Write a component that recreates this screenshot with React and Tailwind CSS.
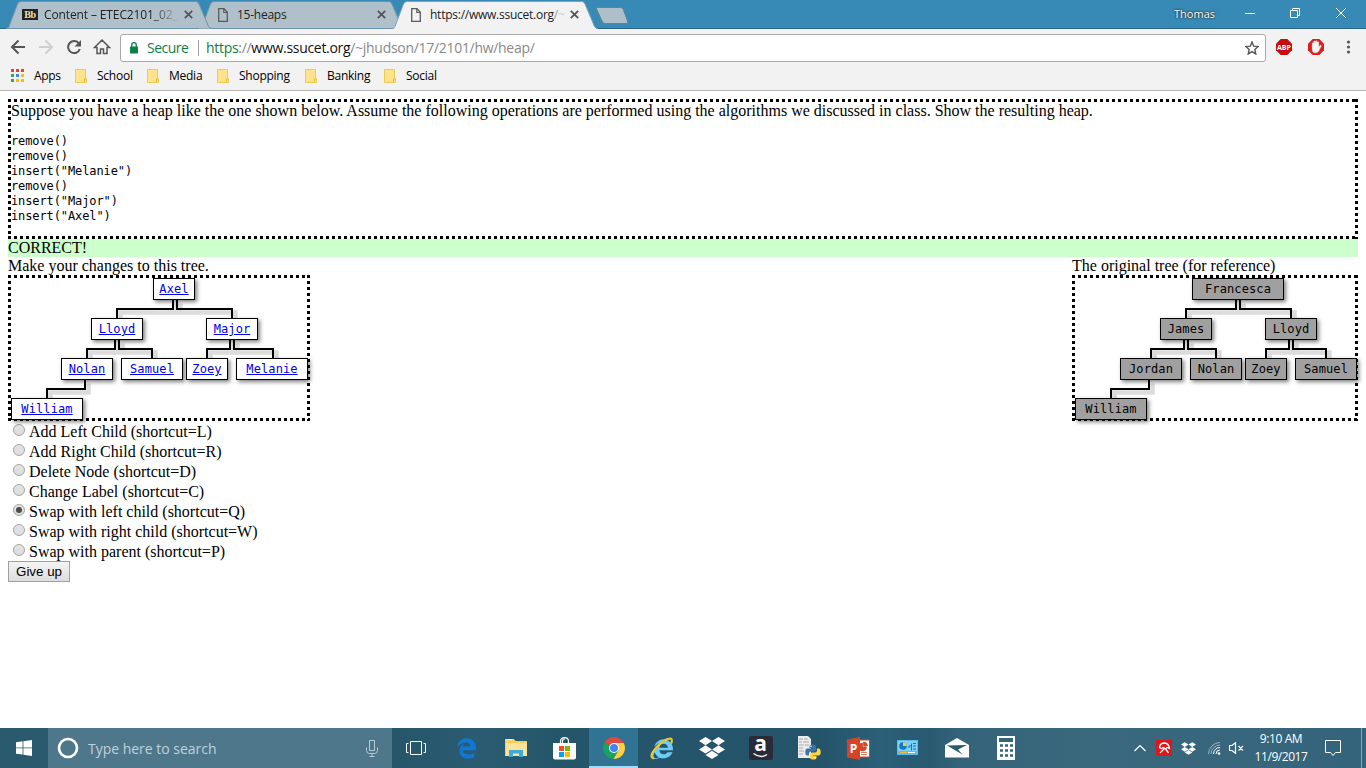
import React from "react";
import { FaDropbox, FaEdgeLegacy, FaInternetExplorer, FaPython } from "react-icons/fa";

const UI = "font-['Open_Sans','Noto_Sans',sans-serif]";

function TabShape({ active }) {
  const d = "M0 28.500Q2 28.500 3 26.500L11.500 4Q12.500 1.500 15 1.500H190Q192 1.500 193 4L202.500 26.500Q203.500 28.500 206 28.500";
  return (
    <svg className="absolute inset-0" width="208" height="29" viewBox="0 0 208 29">
      <path d={d + "Z"} fill={active ? "#f2f2f2" : "#afc0cb"} />
      <path d={d} fill="none" stroke={active ? "#7fa3b8" : "#7394a7"} strokeWidth="1" />
      {active && <rect x="2" y="28" width="202" height="1" fill="#f2f2f2" />}
    </svg>
  );
}

function PageIcon() {
  return (
    <svg width="10" height="14" viewBox="0 0 10 14" className="shrink-0">
      <path d="M.7.7H6L9.300 4.200V13.300H.7Z" fill="none" stroke="#5a5a5a" strokeWidth="1.3" />
      <path d="M5.800.7V4.500H9.300" fill="none" stroke="#5a5a5a" strokeWidth="1.2" />
    </svg>
  );
}

function CloseX() {
  return (
    <svg width="9" height="9" viewBox="0 0 9 9" className="shrink-0">
      <path d="M.8.8l7.400 7.400M8.200.8L.8 8.200" stroke="#555" strokeWidth="1.8" fill="none" />
    </svg>
  );
}

function Tab({ icon, title, active, className, inner, titleClass }) {
  return (
    <div className={`relative h-[29px] w-[208px] shrink-0 ${className}`}>
      <TabShape active={active} />
      <div className={`relative flex h-[28px] items-center pt-px ${inner}`}>
        {icon}
        <span className={`text-[12px] whitespace-nowrap text-[#222] ${titleClass}`}>{title}</span>
        <CloseX />
      </div>
    </div>
  );
}

function TitleBar() {
  return (
    <div className="flex h-[29px] border-b border-[#2c6389] bg-[#378ab5]">
      <Tab
        className="z-10 ml-[6px]"
        inner="pl-[16px]"
        titleClass="ml-[6px] w-[140px] tracking-[-0.12px] [mask-image:linear-gradient(90deg,#000_76%,transparent_97%)]"
        title="Content – ETEC2101_02_"
        icon={<span className="flex h-[11px] w-[16px] shrink-0 items-center justify-center bg-[#222] font-['Liberation_Serif',serif] text-[10px] leading-none font-bold tracking-[-0.3px] text-[#eee0b0]">Bb</span>}
      />
      <Tab className="-ml-[15px]" inner="pl-[19px]" titleClass="ml-[9px] w-[140px] tracking-[-0.25px]" title="15-heaps" icon={<PageIcon />} />
      <Tab
        className="z-20 -ml-[15px]"
        inner="pl-[19px]"
        titleClass="ml-[9px] w-[140px] tracking-[-0.25px]"
        title={<>https://www.ssucet.org<span className="text-[#999]">/</span><span className="text-[#ccc]">~</span></>}
        active
        icon={<PageIcon />}
      />
      <svg width="36" height="28" viewBox="0 0 36 28" className="-ml-[7px] shrink-0">
        <path d="M4.500 7.500H27.500C29 7.500 30 8.500 30.500 10L34.500 21C35 22.500 34.500 23.500 33 23.500H12C10.500 23.500 9.500 22.500 9 21L3.500 9Q3 7.500 4.500 7.500Z" fill="#aebfca" stroke="#5f8296" />
      </svg>
      <div className="flex-1" />
      <div className="flex h-[28px] items-center">
        <span className="mr-[30px] text-[11px] text-white [text-shadow:0_0_2px_#222,0_0_2px_#333]">Thomas</span>
        <svg width="121" height="28" viewBox="0 0 121 28" stroke="#fff" fill="none">
          <path d="M0 13.500H10M45.500 10.500h7v7h-7zM47.500 10.500v-2h7v7h-2M91 8l10 10M101 8L91 18" />
        </svg>
      </div>
    </div>
  );
}

function Toolbar() {
  return (
    <div className="flex h-[37px] items-center">
      <svg width="120" height="37" viewBox="0 0 120 37" fill="none" stroke="#555" strokeWidth="2">
        <path d="M25 18H12.500M18.500 11.500L12 18l6.500 6.500" />
        <path d="M39 18h12.500M45.500 11.500L52 18l-6.500 6.500" stroke="#cfcfcf" />
        <path d="M79 14.600A6 6 0 1 0 79.800 20" />
        <path d="M81 11v6.500h-6.500z" fill="#555" stroke="none" />
        <path d="M94.500 18.500L102 11l7.500 7.500h-2.500v6h-3.500v-4.500h-3v4.500H97v-6z" strokeWidth="1.5" />
      </svg>
      <div className="flex h-[28px] w-[1146px] items-center rounded-[3px] border border-[#a9a9a9] bg-white pr-[6px] pl-[9px]">
        <svg width="8" height="12" viewBox="0 0 8 12">
          <rect y="4.500" width="8" height="7" rx=".7" fill="#0b8043" />
          <path d="M1.700 5V3a2.300 2.300 0 0 1 4.600 0v2" fill="none" stroke="#0b8043" strokeWidth="1.300" />
        </svg>
        <span className="-mt-px ml-[9px] w-[51px] text-[14px] tracking-[-0.5px] text-[#0b8043]">Secure</span>
        <span className="h-[16px] w-px bg-[#a0a0a0]" />
        <span className="-mt-px ml-[7px] text-[14px] tracking-[-0.3px] whitespace-nowrap text-[#888]">
          <span className="text-[#0b8043]">https</span>://<span className="text-[#111]">www.ssucet.org</span>/~jhudson/17/2101/hw/heap/
        </span>
        <svg className="ml-auto" width="14" height="14" viewBox="0 0 14 14">
          <path d="M7 1l1.700 4.200 4.500.4-3.400 3 1 4.400L7 10.600 3.200 13l1-4.400-3.400-3 4.500-.4z" fill="none" stroke="#555" strokeWidth="1.400" />
        </svg>
      </div>
      <svg width="100" height="37" viewBox="0 0 100 37">
        <path d="M14.700 10h6.600l4.700 4.700v6.600L21.300 26h-6.600L10 21.300v-6.600z" fill="#c70d0d" />
        <text x="18" y="20.800" textAnchor="middle" fontSize="7.800" fontWeight="700" fill="#fff" fontFamily="Open Sans" textLength="14" lengthAdjust="spacingAndGlyphs">ABP</text>
        <path d="M46.700 10h6.600l4.700 4.700v6.600L53.300 26h-6.600L42 21.300v-6.600z" fill="#df1b1b" />
        <path d="M46 19v-5q.8-1.200 1.600 0v-1.500q.9-1.300 1.800 0v-.5q.9-1.200 1.800 0v1q.9-1 1.700 0v4.500l1.600-1.500q1.400 0 .8 1.500l-2.400 4.500q-1 2-3.500 2-3.400 0-3.400-4z" fill="#f4f4f4" stroke="#c9a5a5" strokeWidth=".4" />
        <g fill="#555"><circle cx="82.500" cy="13" r="1.600" /><circle cx="82.500" cy="18" r="1.600" /><circle cx="82.500" cy="23" r="1.600" /></g>
      </svg>
    </div>
  );
}

const dots = ["#ea4335", "#ea4335", "#ea4335", "#34a853", "#4285f4", "#fbbc05", "#34a853", "#fbbc05", "#fbbc05"];
const folders = [
  ["School", "w-[72px]"],
  ["Media", "w-[70px]"],
  ["Shopping", "w-[88px]"],
  ["Banking", "w-[79px]"],
  ["Social", "w-[70px]"],
];

function Bookmarks() {
  return (
    <div className="flex h-[25px] items-start pl-[11px] text-[12px] leading-[20px] text-black">
      <div className="mt-[3px] grid grid-cols-3 gap-[2px]">
        {dots.map((c, i) => (
          <span key={i} className="size-[3px]" style={{ background: c }} />
        ))}
      </div>
      <span className="ml-[10px] w-[41px] tracking-[-0.3px]">Apps</span>
      {folders.map(([name, w]) => (
        <span key={name} className={`flex tracking-[-0.25px] ${w}`}>
          <svg width="13" height="14" viewBox="0 0 13 14" className="mt-[3px] mr-[9px] shrink-0">
            <path d="M.5.5h10v9h1v4H.5z" fill="#fee28c" stroke="#eecb55" />
            <path d="M9.500 13V10H11.500" stroke="#e9b93b" fill="none" />
          </svg>
          {name}
        </span>
      ))}
    </div>
  );
}

function DottedBox({ className, children }) {
  return (
    <div
      className={`relative p-[3px] bg-[linear-gradient(90deg,#000_50%,transparent_50%),linear-gradient(90deg,#000_50%,transparent_50%),linear-gradient(180deg,#000_50%,transparent_50%),linear-gradient(180deg,#000_50%,transparent_50%)] [background-size:6px_3px,6px_3px,3px_6px,3px_6px] [background-position:0_0,0_100%,0_0,100%_0] [background-repeat:repeat-x,repeat-x,repeat-y,repeat-y] ${className}`}
    >
      {children}
    </div>
  );
}

// Nodes: [label, left, top, width]; links: [stubX, childX, elbowY]
const workTree = {
  nodes: [
    ["Axel", 145, 3, 42], ["Lloyd", 83, 43, 52], ["Major", 198, 43, 52], ["Nolan", 53, 83, 52],
    ["Samuel", 113, 83, 62], ["Zoey", 178, 83, 42], ["Melanie", 228, 83, 72], ["William", 3, 123, 72],
  ],
  links: [
    [165, 109, 34], [169, 224, 34], [107, 79, 74], [111, 144, 74],
    [222, 199, 74], [226, 265, 74], [77, 39, 114],
  ],
};
const originalTree = {
  nodes: [
    ["Francesca", 120, 3, 92], ["James", 88, 43, 52], ["Lloyd", 193, 43, 52], ["Jordan", 48, 83, 62],
    ["Nolan", 118, 83, 52], ["Zoey", 173, 83, 42], ["Samuel", 223, 83, 62], ["William", 3, 123, 72],
  ],
  links: [
    [164, 114, 34], [168, 219, 34], [112, 79, 74], [116, 144, 74],
    [217, 194, 74], [221, 254, 74], [77, 39, 114],
  ],
};

function Tree({ tree, width, editable }) {
  const d = tree.links.map(([a, b, y]) => `M${a} ${y - 9}V${y}H${b}V${y + 9}`).join("");
  return (
    <DottedBox className={`h-[146px] ${width}`}>
      <svg className="absolute top-0 left-0 overflow-visible" width="300" height="146" fill="none">
        <path d={d} transform="translate(3.500 3.500)" stroke="#dcdcdc" strokeWidth="4.500" className="blur-[0.6px]" />
        <path d={d} stroke="#000" strokeWidth="2" />
      </svg>
      {tree.nodes.map(([label, x, y, w]) => (
        <div
          key={label}
          style={{ left: x, top: y, width: w }}
          className={`absolute flex h-[22px] items-center justify-center border border-black font-['DejaVu_Sans_Mono',monospace] text-[12px] leading-[20px] tracking-[0.1px] shadow-[2px_2px_4px_rgba(0,0,0,0.5)] ${editable ? "bg-white text-[#0000ee] underline" : "bg-[#a0a0a0] text-black"}`}
        >
          {label}
        </div>
      ))}
    </DottedBox>
  );
}

const options = [
  "Add Left Child (shortcut=L)",
  "Add Right Child (shortcut=R)",
  "Delete Node (shortcut=D)",
  "Change Label (shortcut=C)",
  "Swap with left child (shortcut=Q)",
  "Swap with right child (shortcut=W)",
  "Swap with parent (shortcut=P)",
];

function Content() {
  return (
    <main className="h-[637px] bg-white px-[8px] pt-[8px] font-['Liberation_Serif',serif] text-[16px] leading-[18px] text-black">
      <DottedBox className="h-[140px]">
        <div className="whitespace-nowrap">
          Suppose you have a heap like the one shown below. Assume the following operations are performed using the algorithms we discussed in class. Show the resulting heap.
        </div>
        <pre className="mt-[14px] font-['DejaVu_Sans_Mono',monospace] text-[12px] leading-[15px] tracking-[-0.1px]">
          {'remove()\nremove()\ninsert("Melanie")\nremove()\ninsert("Major")\ninsert("Axel")'}
        </pre>
      </DottedBox>
      <div className="h-[18px] bg-[#ccffcc]">CORRECT!</div>
      <div className="flex justify-between">
        <div>
          <div>Make your changes to this tree.</div>
          <Tree tree={workTree} width="w-[302px]" editable />
        </div>
        <div>
          <div>The original tree (for reference)</div>
          <Tree tree={originalTree} width="w-[286px]" />
        </div>
      </div>
      <div className="pt-px">
        {options.map((o, i) => (
          <label key={o} className="flex h-[20px] items-start leading-[20px]">
            <span className="mt-[2px] mr-[4px] ml-[5px] flex size-[12px] items-center justify-center rounded-full border border-[#a5a5a5] bg-linear-to-b from-[#e4e4e4] to-[#dcdcdc]">
              {i === 4 && <span className="size-[6px] rounded-full bg-[#4c4c4c]" />}
            </span>
            {o}
          </label>
        ))}
      </div>
      <button className="-mt-px flex h-[21px] w-[62px] items-center justify-center border border-[#a0a0a0] bg-linear-to-b from-[#f4f4f4] to-[#dddddd] font-['Liberation_Sans',sans-serif] text-[13.33px] leading-none">
        Give up
      </button>
    </main>
  );
}

function Cell({ children, className = "w-[49px]" }) {
  return <div className={`flex h-[40px] shrink-0 items-center justify-center ${className}`}>{children}</div>;
}

function Taskbar() {
  return (
    <footer className="flex h-[40px] bg-[linear-gradient(90deg,#2a5a6d_0,#25566a_392px,#2b5b70_480px,#24566a_560px,#24546a_820px,#2b6078_880px,#285a70_930px,#35647a_960px,#3a687d_1100px,#34647c_1366px)] text-white">
      <Cell className="w-[48px]">
        <svg width="16" height="16" viewBox="0 0 16 16" fill="#fff">
          <path d="M0 2.300L6.600 1.300V7.500H0zM7.400 1.200L16 0v7.500H7.400zM0 8.300h6.600v6.300L0 13.700zM7.400 8.300H16V16l-8.600-1.200z" />
        </svg>
      </Cell>
      <div className="flex w-[344px] shrink-0 items-center bg-[#4f778c]">
        <svg width="22" height="22" viewBox="0 0 22 22" className="ml-[9px]"><circle cx="11" cy="11" r="9" fill="none" stroke="#fff" strokeWidth="2.700" /></svg>
        <span className="ml-[9px] text-[14px] tracking-[-0.02px] whitespace-nowrap text-[#c0d0d9]">Type here to search</span>
        <svg width="12" height="17" viewBox="0 0 12 17" className="mr-[14px] ml-auto" fill="none" stroke="#b8cad4" strokeWidth="1">
          <path d="M3.500.5h5v10h-5zM.5 7.500v3q0 3 3 3h5q3 0 3-3v-3M6 13.500V16M3.500 16.500h5" />
        </svg>
      </div>
      <Cell className="w-[50px] pr-[2px]">
        <svg width="20" height="14" viewBox="0 0 20 14" fill="none" stroke="#fff"><path d="M4.500.5h11v13h-11zM2.500 2.500h-2v9h2M17.500 2.500h2v9h-2" /></svg>
      </Cell>
      <Cell><FaEdgeLegacy size={21} color="#0f78d7" /></Cell>
      <Cell>
        <svg width="22" height="20" viewBox="0 0 22 20">
          <path d="M0 1h9l1.500 2H22v15H0z" fill="#f5cf64" /><path d="M1 5h21v13H1z" fill="#fbe49a" /><path d="M1.500 1.800h6" stroke="#fff5cd" />
          <path d="M4 19v-7h14v7h-4v-3.500H8V19z" fill="#3fabdc" />
        </svg>
      </Cell>
      <Cell>
        <svg width="23" height="23" viewBox="0 0 23 23">
          <path d="M0 6h23v14.500q0 2-2 2H2q-2 0-2-2z" fill="#fff" />
          <path d="M7.500 7V4.500Q7.500.7 11.500.7t4 3.800V7M9.500 6V4Q9.500 2 12 2" fill="none" stroke="#fff" strokeWidth="1.200" />
          <path d="M6 9h5v5H6z" fill="#f25022" /><path d="M12 9h5v5h-5z" fill="#7fba00" /><path d="M6 15h5v5H6z" fill="#00a4ef" /><path d="M12 15h5v5h-5z" fill="#ffb900" />
        </svg>
      </Cell>
      <Cell className="w-[49px] border-b-2 border-[#a1dcfb] bg-[#307392]">
        <svg width="22" height="22" viewBox="0 0 22 22" className="mt-[2px]">
          <path d="M11 11L1.500 5.500A11 11 0 0 1 20.500 5.500L20.500 6z" fill="#dd4b3e" />
          <path d="M11 11L1.500 5.500A11 11 0 0 0 10.500 22L15.500 13.500z" fill="#1aa260" />
          <path d="M11 6h9.800A11 11 0 0 1 10.500 22l5-8.500z" fill="#ffce43" />
          <circle cx="11" cy="11" r="5" fill="#fff" /><circle cx="11" cy="11" r="4" fill="#4383ef" />
        </svg>
      </Cell>
      <Cell>
        <span className="relative">
          <FaInternetExplorer size={21} color="#6dcdf5" />
          <svg className="absolute -top-px -left-[2px]" width="24" height="23" viewBox="0 0 24 23"><path d="M4 21.500Q-2 20 6 11T20.500 1.500Q23 2 21 6.500" fill="none" stroke="#f4c51e" strokeWidth="2" /></svg>
        </span>
      </Cell>
      <Cell><FaDropbox size={26} /></Cell>
      <Cell>
        <div className="relative flex size-[24px] justify-center rounded-[2px] bg-[#292c38]">
          <span className="-mt-[3px] text-[21px] leading-[21px] font-bold">a</span>
          <svg className="absolute bottom-[2px] left-[4px]" width="16" height="5" viewBox="0 0 16 5"><path d="M.5.5Q8 6 14 1.500" fill="none" stroke="#fff" strokeWidth="1.300" /></svg>
        </div>
      </Cell>
      <Cell>
        <span className="relative h-[24px] w-[23px]">
          <svg width="14" height="22" viewBox="0 0 14 22"><path d="M0 0h10l3 3v19H0z" fill="#ececec" /><path d="M1 3h4M6 3h4M1 6h3M5 6h6M1 9h5M7 9h4M1 12h4M1 15h5M1 18h4" stroke="#a5acb0" /></svg>
          <svg className="absolute right-0 bottom-0" width="16" height="16" viewBox="0 0 16 16">
            <path d="M7.500.5q3.500 0 3.500 2v3q0 2-2 2H6q-2 0-2 2v2H2.500Q.3 11.500.3 8t2.200-3.500H8V4H4.500V2.500q0-2 3-2z" fill="#3974a8" />
            <path d="M8.500 15.500q-3.500 0-3.500-2v-3q0-2 2-2h3q2 0 2-2v-2h1.500q2.200 0 2.200 3.500t-2.200 3.500H8v.5h3.500v1.500q0 2-3 2z" fill="#ffd546" />
            <circle cx="6" cy="2.300" r=".7" fill="#fff" /><circle cx="10" cy="13.700" r=".7" fill="#fff" />
          </svg>
        </span>
      </Cell>
      <Cell>
        <svg width="23" height="23" viewBox="0 0 23 23">
          <path d="M11 3h11.500v17H11z" fill="#fff" stroke="#d24726" /><path d="M15.500 6v4h4a4 4 0 1 1-4-4zM16.500 5a4 4 0 0 1 4 4h-4zM14 15.500h6M14 17.500h6" fill="#d24726" stroke="#d24726" strokeWidth=".7" />
          <path d="M0 2.500L13 0v23L0 20.500z" fill="#d64325" />
          <text x="6.500" y="16" textAnchor="middle" fontSize="12" fontWeight="700" fontFamily="Open Sans" fill="#fff">P</text>
        </svg>
      </Cell>
      <Cell>
        <svg width="21" height="16" viewBox="0 0 21 16">
          <path d="M0 0h21v15H0z" fill="#5bbcf0" /><path d="M1 1h19v10H1z" fill="#7fd0f8" />
          <circle cx="6" cy="6" r="3.800" fill="#1379c6" /><path d="M6 6V2.200A3.800 3.800 0 0 1 9.800 6z" fill="#ffc83a" />
          <path d="M12 8V6M12 6h2M14.500 3.500v7M16 3.500h3M16 6h3M16 9h3" stroke="#1675bd" fill="none" /><path d="M3 12.500h7" stroke="#f0be36" /><path d="M11 12.500h7" stroke="#fff" />
        </svg>
      </Cell>
      <Cell>
        <svg width="24" height="20" viewBox="0 0 24 20"><path d="M0 7L12 0l12 7v12.500H0z" fill="#fff" /><path d="M2 7.500L22 7l-9 4.500 4.500 5z" fill="#2b596e" /></svg>
      </Cell>
      <Cell>
        <svg width="18" height="24" viewBox="0 0 18 24">
          <path d="M0 0h18v24H0z" fill="#fff" /><path d="M2 2h14v4H2z" fill="#35647a" />
          {[8, 13, 18].map((y) => <path key={y} d={`M3 ${y + 1.5}h3M8 ${y + 1.5}h3M13 ${y + 1.5}h3`} stroke="#35647a" strokeWidth="2.5" strokeDasharray="3 10" />)}
        </svg>
      </Cell>
      <div className="ml-[104px] flex shrink-0 items-center">
        <svg width="12" height="8" viewBox="0 0 12 8"><path d="M.5 7L6 1.500 11.500 7" fill="none" stroke="#fff" strokeWidth="1.200" /></svg>
        <svg width="16" height="16" viewBox="0 0 16 16" className="ml-[10px]">
          <path d="M0 0h16v16H0z" fill="#e1141c" />
          <path d="M3.500 7.500Q4 3 8.500 3q4.500.5 5 5.500L11 7.500 9.500 9 7.500 7.500 5.500 8.500zM8.500 8.500L4 13M10 9.500l2.500 3.500" fill="none" stroke="#fff" strokeWidth="1.300" />
        </svg>
        <FaDropbox size={15} className="ml-[9px]" />
        <svg width="13" height="13" viewBox="0 0 13 13" className="ml-[12px]" fill="none">
          <path d="M.5 12A11.500 11.500 0 0 1 12 .5M3 12a9 9 0 0 1 9-9" stroke="#9db4c0" /><path d="M5.500 12A6.500 6.500 0 0 1 12 5.500M8 12a4 4 0 0 1 4-4" stroke="#fff" /><circle cx="11" cy="11.500" r="1.300" fill="#fff" />
        </svg>
        <svg width="15" height="12" viewBox="0 0 15 12" className="ml-[8px]" fill="none" stroke="#fff" strokeWidth="1.200"><path d="M.5 3.500h2.500L6.500.7v10.600L3 8.500H.5zM9.500 4l4.500 4.500M14 4L9.500 8.500" /></svg>
      </div>
      <div className="ml-[7px] flex w-[60px] shrink-0 flex-col items-center pt-[2px] text-[12px] leading-[18px] whitespace-nowrap">
        <span className="tracking-[-0.4px]">9:10 AM</span>
        <span className="tracking-[-0.45px]">11/9/2017</span>
      </div>
      <svg width="56" height="40" viewBox="0 0 56 40" fill="none" stroke="#fff" className="ml-[-1px] shrink-0">
        <path d="M15.500 12.500h15v12h-5l-2.500 3-2.500-3h-5z" /><path d="M51.500 0v40" stroke="#8ba5b2" />
      </svg>
    </footer>
  );
}

export default function App() {
  return (
    <div className={`h-[768px] w-[1366px] overflow-hidden bg-white ${UI}`}>
      <TitleBar />
      <div className="h-[62px] border-b border-[#b6b6b6] bg-[#f2f2f2]">
        <Toolbar />
        <Bookmarks />
      </div>
      <Content />
      <Taskbar />
    </div>
  );
}
